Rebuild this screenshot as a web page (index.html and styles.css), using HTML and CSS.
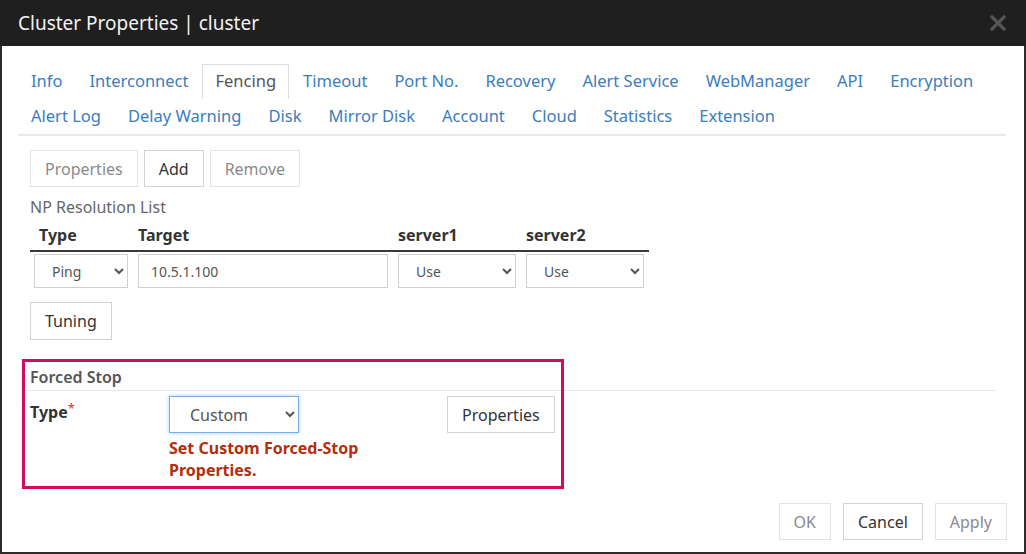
FILE: index.html
```html
<!DOCTYPE html>
<html>
<head>
<meta charset="utf-8">
<link rel="stylesheet" href="styles.css">
</head>
<body>
<div class="dialog">
  <div class="titlebar">
    <span class="title">Cluster Properties | cluster</span>
    <svg class="close" width="16" height="16" viewBox="0 0 16 16"><path d="M2 2L14 14M14 2L2 14" stroke="#555" stroke-width="3.2" stroke-linecap="square"/></svg>
  </div>
  <div class="body">
    <div class="tabs">
      <div class="tabrow">
        <span class="tab">Info</span>
        <span class="tab">Interconnect</span>
        <span class="tab active">Fencing</span>
        <span class="tab">Timeout</span>
        <span class="tab">Port No.</span>
        <span class="tab">Recovery</span>
        <span class="tab">Alert Service</span>
        <span class="tab">WebManager</span>
        <span class="tab">API</span>
        <span class="tab">Encryption</span>
      </div>
      <div class="tabrow">
        <span class="tab">Alert Log</span>
        <span class="tab">Delay Warning</span>
        <span class="tab">Disk</span>
        <span class="tab">Mirror Disk</span>
        <span class="tab">Account</span>
        <span class="tab">Cloud</span>
        <span class="tab">Statistics</span>
        <span class="tab">Extension</span>
      </div>
    </div>
    <div class="content">
      <div class="toolbar">
        <button class="btn disabled">Properties</button>
        <button class="btn">Add</button>
        <button class="btn disabled">Remove</button>
      </div>
      <div class="listlabel">NP Resolution List</div>
      <div class="nptable">
        <div class="th c1">Type</div>
        <div class="th">Target</div>
        <div class="th">server1</div>
        <div class="th">server2</div>
        <div class="td c1"><select class="sel"><option>Ping</option></select></div>
        <div class="td"><input class="inp" type="text" value="10.5.1.100"></div>
        <div class="td"><select class="sel"><option>Use</option></select></div>
        <div class="td"><select class="sel"><option>Use</option></select></div>
      </div>
      <button class="btn tuning">Tuning</button>
      <div class="forced">
        <div class="legend">Forced Stop</div>
        <div class="frow">
          <div class="flabel">Type<sup class="req">*</sup></div>
          <div class="fmid">
            <select class="sel focus"><option>Custom</option></select>
            <div class="err">Set Custom Forced-Stop Properties.</div>
          </div>
          <div class="fright"><button class="btn">Properties</button></div>
        </div>
      </div>
    </div>
    <div class="footer">
      <button class="btn disabled">OK</button>
      <button class="btn">Cancel</button>
      <button class="btn disabled">Apply</button>
    </div>
  </div>
  <div class="highlight"></div>
</div>
</body>
</html>
```
FILE: styles.css
```css
* { box-sizing: border-box; }
html, body { margin: 0; padding: 0; background: #fff; }
body { font-family: "Noto Sans", "Open Sans", sans-serif; color: #333; }

.dialog {
  position: relative;
  width: 1026px;
  height: 554px;
  border: 2px solid #2b2b2b;
  border-top: 0;
  display: flex;
  flex-direction: column;
  background: #fff;
}

.titlebar {
  height: 46px;
  background: #1f1f1f;
  display: flex;
  align-items: center;
  justify-content: space-between;
  margin: 0 -2px;
  padding: 0 20px 0 18px;
}
.title { color: #f2f2f2; font-size: 19px; }
.close { display: block; }

.body {
  flex: 1;
  display: flex;
  flex-direction: column;
  padding-top: 18px;
}

.tabs {
  margin: 0 18px 0 16px;
  border-bottom: 2px solid #e8e8e8;
}
.tabrow { display: flex; }
.tab {
  height: 35px;
  line-height: 32px;
  padding: 0 12px;
  margin-right: 1px;
  font-size: 16.5px;
  color: #3b7dbd;
  border: 1px solid transparent;
  border-bottom: 0;
}
.tab.active { color: #555; border-color: #ddd; }

.content { padding: 14px 0 0 28px; }

.toolbar { display: flex; gap: 6px; }
.btn {
  font-family: "Noto Sans", "Open Sans", sans-serif;
  font-size: 16px;
  height: 37px;
  padding: 0 14px;
  background: #fff;
  color: #333;
  border: 1px solid #d2d2d2;
  border-radius: 0;
}
.btn.disabled { color: #8a8a8a; border-color: #e3e3e3; }

.listlabel { font-size: 16px; color: #666; margin-top: 8px; line-height: 24px; }

.nptable {
  display: grid;
  grid-template-columns: 103px 260px 128px 128px;
  width: 619px;
  margin-top: 4px;
}
.th {
  font-weight: bold;
  font-size: 16px;
  padding: 0 5px 3px 5px;
  line-height: 24px;
  border-bottom: 2px solid #3a3a3a;
}
.th.c1 { padding-left: 9px; }
.td { padding: 2px 5px 0 5px; }
.td.c1 { padding-left: 4px; }

.sel {
  width: 100%;
  height: 34px;
  font-family: "Noto Sans", "Open Sans", sans-serif;
  font-size: 14px;
  color: #555;
  background: #fff;
  border: 1px solid #d0d0d0;
  border-radius: 0;
  padding: 0 4px 0 13px;
}
.inp {
  width: 100%;
  height: 34px;
  font-family: "Noto Sans", "Open Sans", sans-serif;
  font-size: 14px;
  color: #555;
  border: 1px solid #d0d0d0;
  border-radius: 0;
  padding: 0 12px;
}

.tuning { margin-top: 14px; height: 38px; }

.forced { margin-top: 25px; margin-right: 28px; margin-left: -4px; }
.legend {
  font-size: 16px;
  font-weight: 600;
  color: #555;
  padding: 0 0 1px 4px;
  line-height: 24px;
  border-bottom: 1px solid #e6e6e6;
}
.frow {
  display: grid;
  grid-template-columns: 143px 278px auto;
  padding-top: 5px;
}
.flabel { font-weight: bold; font-size: 16px; padding-left: 4px; line-height: 22px; padding-top: 5px; }
.req { color: #d33; font-weight: normal; font-size: 13px; vertical-align: top; position: relative; top: -4px; }
.fmid .sel.focus {
  width: 130px;
  height: 37px;
  font-size: 16px;
  border: 1px solid #76aee6;
  box-shadow: 0 0 4px rgba(102,175,233,0.6);
  padding-left: 16px;
}
.err {
  color: #b42d0c;
  font-weight: bold;
  font-size: 16px;
  line-height: 22px;
  margin-top: 4px;
  width: 240px;
}
.fright .btn { height: 37px; }

.footer {
  margin-top: auto;
  display: flex;
  justify-content: flex-end;
  gap: 12px;
  padding: 0 17px 12px 0;
}

.highlight {
  position: absolute;
  left: 20px;
  top: 359px;
  width: 542px;
  height: 130px;
  border: 3px solid #d40a5f;
  pointer-events: none;
}
```
